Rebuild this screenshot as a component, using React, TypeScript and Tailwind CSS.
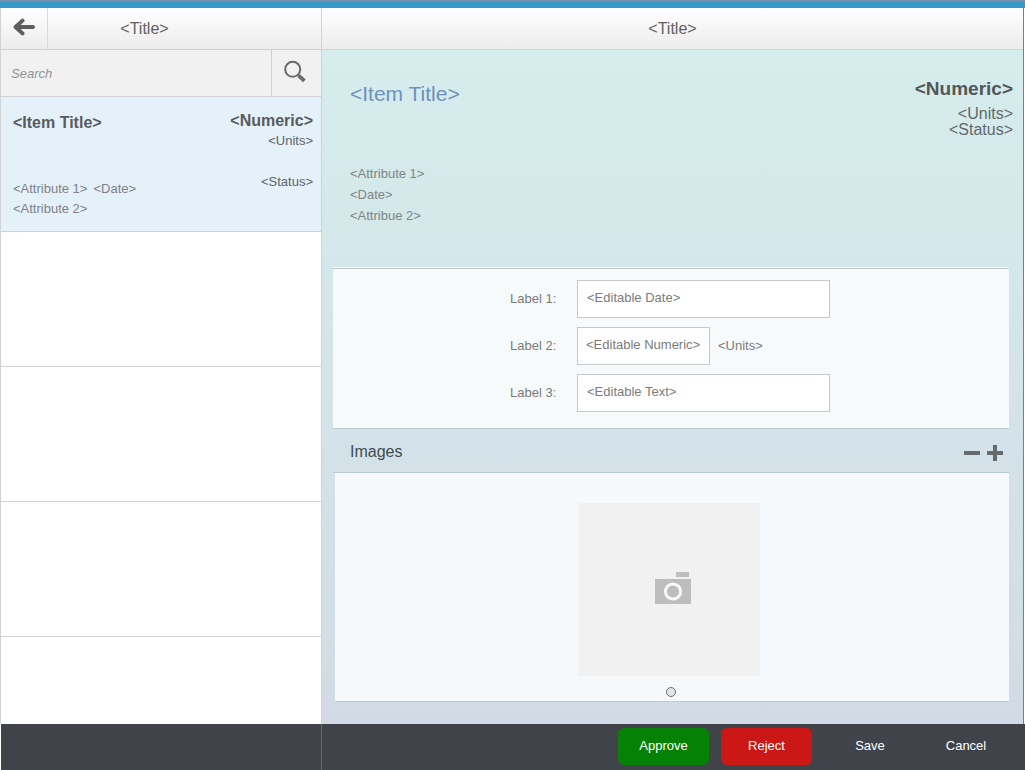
import type { ReactNode } from "react";

function BackIcon() {
  return (
    <svg width="22" height="18" viewBox="0 0 22 18" fill="none" stroke="#5f5f5f" strokeLinecap="round" aria-hidden="true">
      <path d="M3 9H20" strokeWidth="4" />
      <path d="M9.5 2.6L2.6 9L9.5 15.4" strokeWidth="4" strokeLinejoin="round" />
    </svg>
  );
}

function SearchIcon() {
  return (
    <svg width="24" height="24" viewBox="0 0 24 24" fill="none" stroke="#6a6a6a" aria-hidden="true">
      <circle cx="9.7" cy="9.3" r="7.5" strokeWidth="2" />
      <path d="M14.8 14.6L17 16.8" strokeWidth="2.4" />
      <path d="M16 15.8L21.4 20.8" strokeWidth="3.8" />
    </svg>
  );
}

function CameraIcon() {
  return (
    <svg width="36" height="32" viewBox="0 0 36 32" aria-hidden="true">
      <rect x="21" y="0" width="13" height="5" fill="#bdbdbd" />
      <rect x="0" y="7" width="36" height="25" fill="#bdbdbd" />
      <circle cx="18" cy="19.5" r="7.6" fill="none" stroke="#f7f7f7" strokeWidth="3" />
    </svg>
  );
}

function ListItem() {
  return (
    <button type="button" className="flex h-[135px] w-full shrink-0 justify-between border-b border-[#c9ced2] bg-[#e5f1f9] pl-3 pr-2 text-left text-[13px] leading-5 text-[#7d8286]">
      <span className="flex flex-col justify-between pb-3 pt-4">
        <strong className="text-base leading-5 text-[#585b5e]">&lt;Item Title&gt;</strong>
        <span className="flex flex-col">
          <span className="flex gap-[6px]">
            <span>&lt;Attribute 1&gt;</span>
            <span>&lt;Date&gt;</span>
          </span>
          <span>&lt;Attribute 2&gt;</span>
        </span>
      </span>
      <span className="flex flex-col items-end pt-[14px] text-[#5f6468]">
        <strong className="text-base leading-5 text-[#585b5e]">&lt;Numeric&gt;</strong>
        <span>&lt;Units&gt;</span>
        <span className="mt-[21px]">&lt;Status&gt;</span>
      </span>
    </button>
  );
}

function Field({ id, label, value, narrow, children }: { id: string; label: string; value: string; narrow?: boolean; children?: ReactNode }) {
  return (
    <div className="flex items-center text-[13px] text-[#7b7b7b]">
      <label htmlFor={id} className="w-[67px] shrink-0">{label}</label>
      <div className="flex w-[253px] items-center gap-2">
        <input
          id={id}
          defaultValue={value}
          className={`h-[38px] border border-[#c6c9cb] bg-white pb-[3px] outline-none ${narrow ? "w-[133px] px-2" : "w-full px-[9px]"}`}
        />
        {children}
      </div>
    </div>
  );
}

export default function App() {
  return (
    <div className="flex min-h-screen flex-col bg-white font-['Liberation_Sans',Arial,sans-serif] text-[#5f5f5f]">
      <div className="h-2 shrink-0 border-t-2 border-[#7890ac] bg-[#3498c8]" />
      <div className="mr-px flex flex-1 border-r border-[#6b838c]">
        <aside className="flex w-[322px] shrink-0 flex-col border-x border-[#ced3d6]">
          <header className="flex h-[42px] border-b border-[#d0d0d0] bg-linear-to-b from-white to-[#ececec]">
            <button type="button" aria-label="Back" className="flex w-[47px] items-center justify-center border-r border-[#d9d9d9] pb-1">
              <BackIcon />
            </button>
            <h1 className="flex flex-1 items-center justify-center pr-20 pt-px text-base">&lt;Title&gt;</h1>
          </header>
          <form className="flex h-[47px] border-b border-[#d0d4d8] bg-[#f1f1f1]" onSubmit={(e) => e.preventDefault()}>
            <input
              type="text"
              aria-label="Search"
              placeholder="Search"
              className="min-w-0 flex-1 px-[10px] pt-[2px] text-[13px] italic outline-none placeholder:text-[#929292]"
            />
            <button type="submit" aria-label="Run search" className="flex w-[50px] items-center justify-center border-l border-[#d0d0d0] pb-[2px] pr-1">
              <SearchIcon />
            </button>
          </form>
          <ListItem />
          <div className="h-[135px] border-b border-[#d3d3d3]" />
          <div className="h-[135px] border-b border-[#d3d3d3]" />
          <div className="h-[135px] border-b border-[#d3d3d3]" />
          <div className="flex-1" />
        </aside>

        <main className="flex min-w-0 flex-1 flex-col bg-linear-to-b from-[#d6eeed] to-[#d2dbe5]">
          <header className="flex h-[42px] shrink-0 items-center justify-center border-b border-[#d0d4d4] bg-linear-to-b from-white to-[#ececec]">
            <h1 className="text-base">&lt;Title&gt;</h1>
          </header>

          <section className="flex h-[217px] shrink-0 justify-between pl-7 pr-[10px]">
            <div className="pt-8 text-[13px] leading-[21px] text-[#7c8587]">
              <h2 className="mb-[57px] text-[21px] leading-6 text-[#6d91bd]">&lt;Item Title&gt;</h2>
              <p>&lt;Attribute 1&gt;</p>
              <p>&lt;Date&gt;</p>
              <p>&lt;Attribue 2&gt;</p>
            </div>
            <div className="pt-[27px] text-right text-base leading-4 text-[#62696b]">
              <strong className="mb-[5px] block text-[19px] leading-6 text-[#535759]">&lt;Numeric&gt;</strong>
              <p>&lt;Units&gt;</p>
              <p>&lt;Status&gt;</p>
            </div>
          </section>

          <section className="ml-[11px] mr-[14px] border-t border-white">
            <div className="flex flex-col items-center gap-[9px] border-y border-[#bccad0] bg-[#f6fafb] pb-4 pr-[2px] pt-[11px]">
              <Field id="date" label="Label 1:" value="<Editable Date>" />
              <Field id="numeric" label="Label 2:" value="<Editable Numeric>" narrow>
                <span>&lt;Units&gt;</span>
              </Field>
              <Field id="text" label="Label 3:" value="<Editable Text>" />
            </div>
          </section>

          <section className="ml-[11px] mr-[14px]">
            <div className="flex h-[44px] items-center justify-between border-b border-[#bccad0] pl-[17px] pr-[6px]">
              <h2 className="pt-[2px] text-base text-[#3f4a4e]">Images</h2>
              <div className="flex gap-[7px] pt-1">
                <button type="button" aria-label="Remove image">
                  <svg width="16" height="16" viewBox="0 0 16 16" aria-hidden="true">
                    <path d="M0 6H16V10H0Z" fill="#666b6d" />
                  </svg>
                </button>
                <button type="button" aria-label="Add image">
                  <svg width="16" height="16" viewBox="0 0 16 16" aria-hidden="true">
                    <path d="M6 0H10V6H16V10H10V16H6V10H0V6H6Z" fill="#666b6d" />
                  </svg>
                </button>
              </div>
            </div>
            <div className="ml-[2px] flex h-[229px] flex-col items-center border-b border-[#bfcbd5] bg-[#f5f9fb] pr-[2px] pt-[30px]">
              <div className="mr-1 flex h-[173px] w-[181px] items-center justify-center bg-[#f1f1f1] pb-1 pl-[7px]">
                <CameraIcon />
              </div>
              <button type="button" aria-label="Image 1" className="mt-[11px] size-[10px] rounded-full border border-[#6f6f6f] bg-[#e4e4e4]" />
            </div>
          </section>
        </main>
      </div>

      <footer className="ml-px flex h-[46px] shrink-0 bg-[#40444a] text-[13px] text-white">
        <div className="w-[321px] shrink-0 border-r border-[#66696d]" />
        <div className="flex flex-1 items-center justify-end pb-[2px] pr-[13px]">
          <button type="button" className="mr-3 h-[37px] w-[91px] rounded-md bg-[#058205]">Approve</button>
          <button type="button" className="mr-3 h-[37px] w-[91px] rounded-md bg-[#cc1717]">Reject</button>
          <button type="button" className="h-[37px] w-[92px]">Save</button>
          <button type="button" className="ml-1 h-[37px] w-[92px]">Cancel</button>
        </div>
      </footer>
    </div>
  );
}
